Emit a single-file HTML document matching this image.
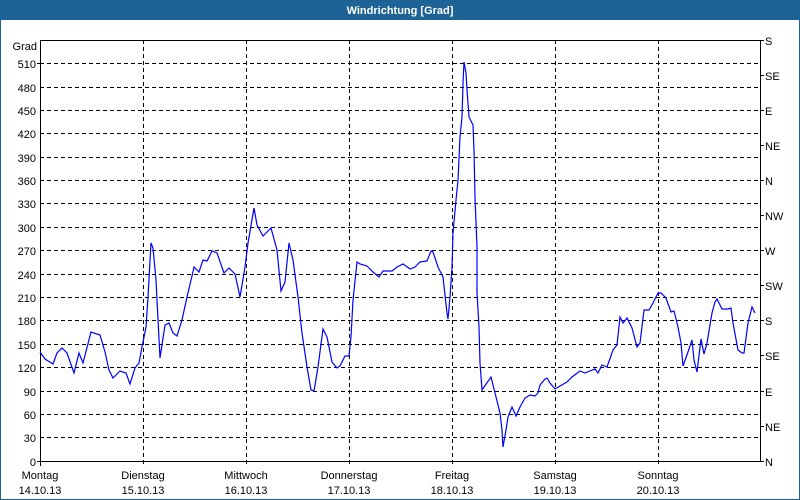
<!DOCTYPE html>
<html><head><meta charset="utf-8"><style>
body{margin:0;width:800px;height:500px;overflow:hidden;background:#fff;}
svg{display:block;font-family:"Liberation Sans",sans-serif;}
</style></head><body>
<svg width="800" height="500" xmlns="http://www.w3.org/2000/svg">
<rect x="0.5" y="0.5" width="799" height="499" fill="#fff" stroke="#1d6396"/>
<rect x="0" y="0" width="800" height="20" fill="#1d6396"/>
<text x="400" y="14" fill="#fff" font-size="11" font-weight="bold" text-anchor="middle">Windrichtung [Grad]</text>
<g stroke="#000" stroke-dasharray="4,3" stroke-width="1">
<line x1="40" x2="760" y1="63.5" y2="63.5"/><line x1="40" x2="760" y1="87.5" y2="87.5"/><line x1="40" x2="760" y1="110.5" y2="110.5"/><line x1="40" x2="760" y1="133.5" y2="133.5"/><line x1="40" x2="760" y1="157.5" y2="157.5"/><line x1="40" x2="760" y1="180.5" y2="180.5"/><line x1="40" x2="760" y1="203.5" y2="203.5"/><line x1="40" x2="760" y1="227.5" y2="227.5"/><line x1="40" x2="760" y1="250.5" y2="250.5"/><line x1="40" x2="760" y1="274.5" y2="274.5"/><line x1="40" x2="760" y1="297.5" y2="297.5"/><line x1="40" x2="760" y1="320.5" y2="320.5"/><line x1="40" x2="760" y1="344.5" y2="344.5"/><line x1="40" x2="760" y1="367.5" y2="367.5"/><line x1="40" x2="760" y1="391.5" y2="391.5"/><line x1="40" x2="760" y1="414.5" y2="414.5"/><line x1="40" x2="760" y1="437.5" y2="437.5"/>
<line y1="40" y2="466" x1="143.5" x2="143.5"/><line y1="40" y2="466" x1="246.5" x2="246.5"/><line y1="40" y2="466" x1="349.5" x2="349.5"/><line y1="40" y2="466" x1="452.5" x2="452.5"/><line y1="40" y2="466" x1="555.5" x2="555.5"/><line y1="40" y2="466" x1="658.5" x2="658.5"/>
</g>
<g stroke="#000" stroke-width="1" fill="none">
<polyline points="40.5,40 40.5,461.5 760.5,461.5 760.5,40.5 40,40.5"/>
<line x1="37" x2="40" y1="63.5" y2="63.5"/><line x1="37" x2="40" y1="461.5" y2="461.5"/>
<line x1="40.5" x2="40.5" y1="461" y2="466"/>
<line x1="760" x2="764" y1="40.5" y2="40.5"/><line x1="760" x2="764" y1="75.5" y2="75.5"/><line x1="760" x2="764" y1="110.5" y2="110.5"/><line x1="760" x2="764" y1="145.5" y2="145.5"/><line x1="760" x2="764" y1="180.5" y2="180.5"/><line x1="760" x2="764" y1="215.5" y2="215.5"/><line x1="760" x2="764" y1="250.5" y2="250.5"/><line x1="760" x2="764" y1="285.5" y2="285.5"/><line x1="760" x2="764" y1="320.5" y2="320.5"/><line x1="760" x2="764" y1="355.5" y2="355.5"/><line x1="760" x2="764" y1="391.5" y2="391.5"/><line x1="760" x2="764" y1="426.5" y2="426.5"/><line x1="760" x2="764" y1="461.5" y2="461.5"/>
</g>
<g font-size="11" fill="#000" text-anchor="end">
<text x="37" y="50">Grad</text>
<text x="36" y="68">510</text><text x="36" y="92">480</text><text x="36" y="115">450</text><text x="36" y="138">420</text><text x="36" y="162">390</text><text x="36" y="185">360</text><text x="36" y="208">330</text><text x="36" y="232">300</text><text x="36" y="255">270</text><text x="36" y="279">240</text><text x="36" y="302">210</text><text x="36" y="325">180</text><text x="36" y="349">150</text><text x="36" y="372">120</text><text x="36" y="396">90</text><text x="36" y="419">60</text><text x="36" y="442">30</text><text x="36" y="466">0</text>
</g>
<g font-size="11" fill="#000">
<text x="765" y="45">S</text><text x="765" y="80">SE</text><text x="765" y="115">E</text><text x="765" y="150">NE</text><text x="765" y="185">N</text><text x="765" y="220">NW</text><text x="765" y="255">W</text><text x="765" y="290">SW</text><text x="765" y="325">S</text><text x="765" y="360">SE</text><text x="765" y="396">E</text><text x="765" y="431">NE</text><text x="765" y="466">N</text>
</g>
<g font-size="11" fill="#000" text-anchor="middle">
<text x="40" y="479">Montag</text><text x="40" y="494">14.10.13</text>
<text x="143" y="479">Dienstag</text><text x="143" y="494">15.10.13</text>
<text x="246" y="479">Mittwoch</text><text x="246" y="494">16.10.13</text>
<text x="349" y="479">Donnerstag</text><text x="349" y="494">17.10.13</text>
<text x="452" y="479">Freitag</text><text x="452" y="494">18.10.13</text>
<text x="555" y="479">Samstag</text><text x="555" y="494">19.10.13</text>
<text x="658" y="479">Sonntag</text><text x="658" y="494">20.10.13</text>
</g>
<polyline fill="none" stroke="#0000ff" stroke-width="1.2" points="40,352 45,359 53,364 57,353 62,348 67,353 74,373 79,353 83,363 91,332 100,335 105,352 109,370 113,378 120,371 126,373 130,384 135,368 139,363 142,347 146,327 148,297 151,243 153,248 156,280 157,300 160,358 165,325 169,323 173,333 177,336 182,320 187,297 192,276 194,267 199,272 203,260 207,261 212,251 217,253 224,273 229,268 235,274 240,297 245,267 248,243 254,208 257,225 263,236 271,228 277,250 281,291 285,282 289,243 293,260 298,297 302,333 307,367 311,390 314,391 318,367 323,329 327,337 332,362 337,368 340,366 345,356 349,356 351,337 353,300 357,262 360,264 367,266 373,272 379,277 383,271 392,271 397,267 403,264 410,269 415,267 420,262 427,261 431,251 433,252 438,267 443,277 445,295 447,313 448,319 450,297 452,267 453,233 456,200 458,180 460,137 462,117 463,83 464,62 466,73 467,90 469,117 473,125 474,150 475,197 477,247 477,293 479,327 480,363 482,390 491,377 495,393 500,413 502,430 503,447 506,430 508,417 512,407 516,416 520,407 525,398 530,395 535,396 538,393 540,385 545,379 547,378 550,383 555,389 560,386 567,382 572,377 580,371 585,373 592,370 595,369 598,373 602,365 607,367 613,350 617,345 620,317 623,323 627,318 632,328 637,347 640,343 644,310 649,310 653,303 658,293 661,293 666,298 671,312 674,311 678,327 681,343 683,366 688,352 692,340 694,360 697,372 701,339 704,354 707,343 712,313 715,302 717,299 722,309 728,309 731,308 733,323 738,350 742,353 744,353 748,323 752,307 755,313"/>
</svg>
</body></html>
